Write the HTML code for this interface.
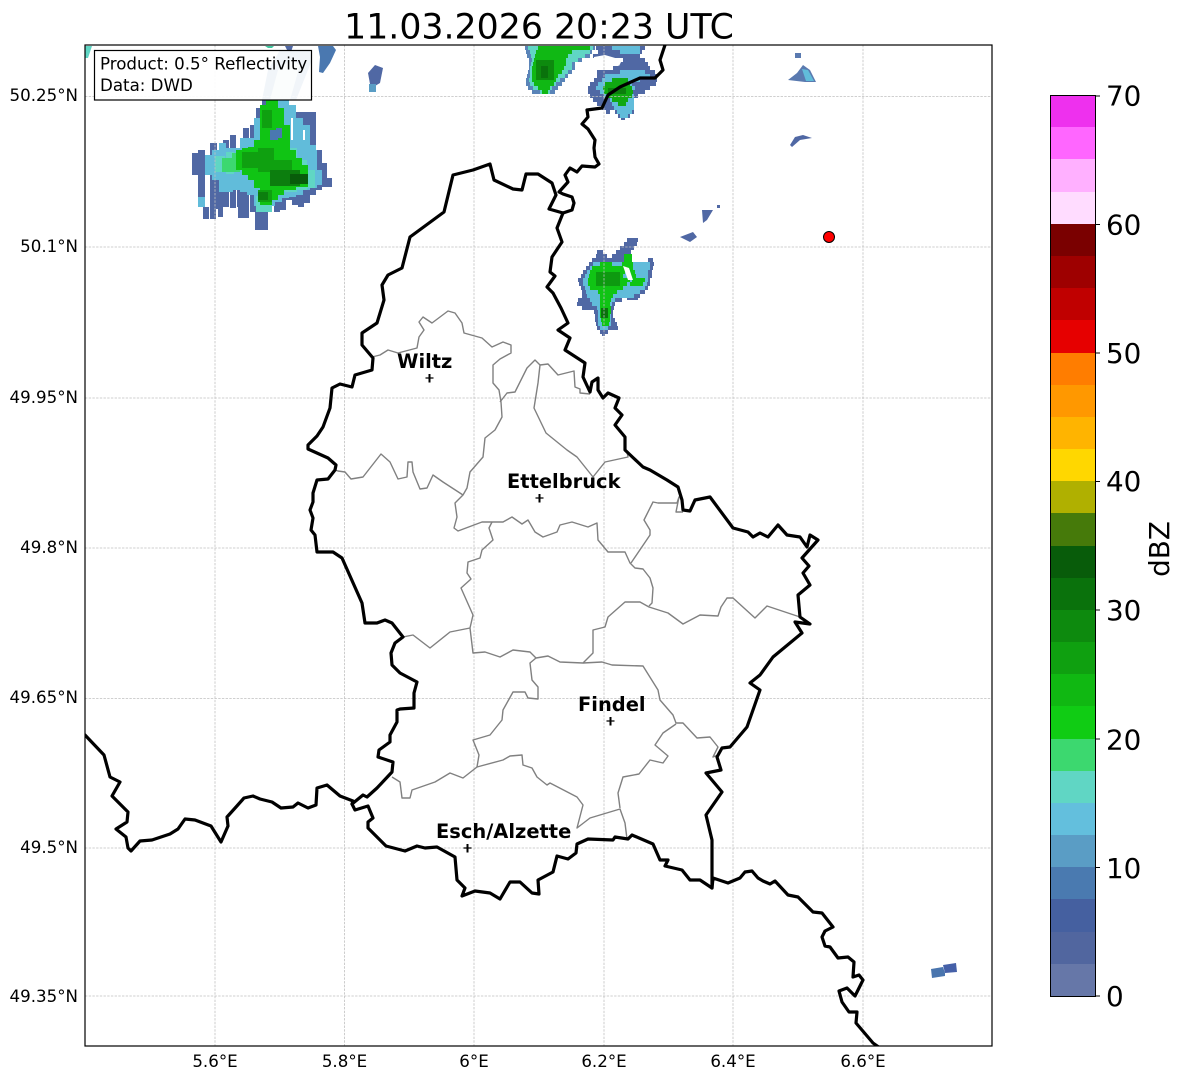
<!DOCTYPE html>
<html><head><meta charset="utf-8"><style>
html,body{margin:0;padding:0;background:#fff}
svg{display:block}
text{font-family:"DejaVu Sans",sans-serif;fill:#000}
.t{font-size:16.67px}
.c{font-size:27.78px}
.l{font-size:19.44px;font-weight:bold}
</style></head><body>
<svg width="1184" height="1081" viewBox="0 0 1184 1081" xmlns="http://www.w3.org/2000/svg">
<defs><clipPath id="ax"><rect x="85" y="45" width="907" height="1001"/></clipPath></defs>
<rect width="1184" height="1081" fill="#fff"/>
<g clip-path="url(#ax)">
<!-- radar blob 1 -->
<g>
<path fill="#5068a4" d="M192 153h6V175h-6zM198 150h7V207h-7zM203 207h6V219h-6zM210 143h7V219h-7zM217 178h6V217h-6zM223 140h6V207h-6zM230 135h6V208h-6zM237 185h6V218h-6zM243 128h6V218h-6zM250 125h6V212h-6zM256 108h6V215h-6zM255 212h13V230h-13zM262 100h6V230h-6zM274 108h6V212h-6zM280 108h6V210h-6zM286 112h6V200h-6zM292 112h6V205h-6zM298 112h6V207h-6zM304 112h6V203h-6zM310 112h6V195h-6zM316 150h6V190h-6zM322 163h5V187h-5zM327 178h5V187h-5z"/>
<path fill="#61bcda" d="M205 155h7V175h-7zM212 150h7V180h-7zM219 143h7V192h-7zM226 148h7V192h-7zM233 148h7V190h-7zM240 138h7V192h-7zM247 138h7V195h-7zM254 118h7V206h-7zM261 105h7V206h-7zM268 100h7V206h-7zM275 100h7V202h-7zM282 100h7V198h-7zM289 105h7V197h-7zM296 118h7V195h-7zM303 125h7V190h-7zM310 145h7V188h-7zM317 170h5V185h-5zM198 197h7V207h-7z"/>
<path fill="#60d6c4" d="M215 156h10V172h-10zM226 152h8V174h-8zM285 148h12V192h-12zM297 160h10V190h-10zM307 170h8V188h-8zM256 196h16V212h-16z"/>
<path fill="#3cd86f" d="M222 158h10V172h-10zM232 153h8V172h-8z"/>
<path fill="#10c414" d="M236 150h6V170h-6zM242 148h6V175h-6zM248 147h6V180h-6zM254 140h6V188h-6zM260 105h6V205h-6zM266 100h6V205h-6zM272 100h6V200h-6zM278 108h6V195h-6zM284 125h6V190h-6zM290 150h6V190h-6zM296 158h6V187h-6zM302 165h6V187h-6z"/>
<path fill="#4a78b0" d="M270 130h8V140h-8zM276 128h6V138h-6z"/>
<path fill="#0fa010" d="M242 152h18V168h-18zM258 148h16V172h-16zM262 110h10V128h-10zM258 190h14V202h-14zM272 160h20V180h-20z"/>
<path fill="#0c7e0e" d="M270 170h30V186h-30zM258 192h10V200h-10z"/>
<path fill="#085c0a" d="M290 174h18V184h-18z"/>
<path fill="#fff" d="M216 209h2V219h-2zM236 207h2V219h-2zM291 118h2V140h-2zM303 130h2V140h-2zM316 112h2V150h-2zM229 208h2V216h-2z"/>
<!-- streak under legend -->
<path fill="#4a7ab0" d="M262 100L268 70 280 50 310 50 312 60 296 100Z"/>
<path fill="#c8e6dc" d="M270 100L278 70 290 60 300 65 290 100Z"/>
<!-- top small -->
<path fill="#4a78b0" d="M318 46L333 46 336 50 330 63 323 73 319 72 320 57Z"/>
<path fill="#5068a4" d="M368 73L375 65 383 68 380 83 375 86 370 84Z"/>
<path fill="#5a9dc5" d="M369 84h7v8h-7z"/>
<path fill="#60d6c4" d="M85 46L92 46 88 58 85 58Z"/>
<path fill="#40c8a0" d="M265 46L274 46 272 48 268 48Z"/>
<path fill="#5068a4" d="M285 46L293 46 291 52 287 50Z"/>
<!-- blob 2 -->
<path fill="#5a84b8" d="M525 46H595v4H525zM526 50H592v4H526zM527 54H590v4H527zM529 58H582v4H529zM529 62H575v4H529zM529 66H575v4H529zM528 70H572v4H528zM527 74H568v4H527zM526 78H565v4H526zM526 82H562v4H526zM528 86H558v4H528zM532 90H555v4H532z"/>
<path fill="#60d6c4" d="M528 46H593v4H528zM530 50H590v4H530zM531 54H585v4H531zM532 58H578v4H532zM531 62H572v4H531zM530 66H572v4H530zM530 70H568v4H530zM530 74H565v4H530zM529 78H560v4H529zM530 82H556v4H530zM533 86H552v4H533zM540 90H550v4H540z"/>
<path fill="#10b814" d="M538 46H590v4H538zM536 50H572v4H536zM535 54H568v4H535zM534 58H566v4H534zM533 62H566v4H533zM532 66H564v4H532zM532 70H562v4H532zM532 74H558v4H532zM532 78H556v4H532zM534 82H554v4H534zM538 86H550v4H538zM542 90H548v4H542z"/>
<path fill="#0d8a0e" d="M536 60H554V80H536z"/>
<path fill="#0a720c" d="M541 66h7V78h-7z"/>
<!-- blob 3 -->
<path fill="#5068a4" d="M596 46H645v4H596zM598 50H642v4H598zM593 54H640v4H593zM623 58H645v4H623zM618 62H648v4H618zM613 66H650v4H613zM597 70H655v4H597zM597 74H657v4H597zM594 78H657v4H594zM590 82H656v4H590zM588 86H650v4H588zM588 90H645v4H588zM590 94H638v4H590zM593 98H632v4H593zM597 102H634v4H597zM602 106H634v4H602zM606 110H610v4H606zM615 110H634v4H615zM618 114H630v4H618zM621 118H625v2H621z"/>
<path fill="#61bcda" d="M612 46H640v4H612zM620 50H640v4H620zM620 70H645v4H620zM605 74H650v4H605zM602 78H640v4H602zM598 82H632v4H598zM596 86H635v4H596zM600 90H632v4H600zM604 94H634v4H604zM610 98H634v4H610zM612 102H634v4H612zM614 106H634v4H614zM617 110H632v4H617zM620 114H628v4H620z"/>
<path fill="#10a812" d="M612 78H628v4H612zM605 82H630v4H605zM603 86H632v4H603zM604 90H633v4H604zM607 94H632v4H607zM612 98H628v4H612zM618 102H626v4H618z"/>
<path fill="#0c7e0e" d="M608 88H626v6H608z"/>
<path fill="#fff" d="M594 57L605 55 622 60 619 66 612 62 608 68 600 68 594 64Z"/>
<!-- blob 4 -->
<path fill="#5068a4" d="M627 238H638v4H627zM624 242H637v4H624zM620 246H634v4H620zM616 250H631v4H616zM597 250H603v4H597zM596 254H607v4H596zM612 254H630v4H612zM592 258H632v4H592zM648 258H653v4H648zM589 262H654v4H589zM586 266H653v4H586zM583 270H652v4H583zM581 274H652v4H581zM578 278H650v4H578zM579 282H650v4H579zM581 286H648v4H581zM582 290H645v4H582zM582 294H640v4H582zM578 298H622v4H578zM627 298H638v2H627zM577 302H615v4H577zM582 306H614v4H582zM594 310H613v4H594zM595 314H613v4H595zM595 318H615v4H595zM596 322H617v4H596zM597 326H618v4H597zM600 330H608v4H600zM602 334H605v2H602z"/>
<path fill="#61bcda" d="M593 262H623v4H593zM630 262H650v4H630zM590 266H650v4H590zM587 270H648v4H587zM585 274H648v4H585zM583 278H648v4H583zM583 282H647v4H583zM585 286H645v4H585zM586 290H640v4H586zM587 294H634v4H587zM590 298H615v4H590zM592 302H612v4H592zM597 306H611v4H597zM598 310H611v4H598zM598 314H611v4H598zM598 318H611v4H598zM598 322H611v4H598zM600 326H608v4H600z"/>
<path fill="#10c414" d="M624 254H632v4H624zM624 258H632v4H624zM600 262H612v4H600zM622 262H633v4H622zM592 266H633v4H592zM590 270H625v4H590zM630 270H635v4H630zM589 274H623v4H589zM630 274H636v4H630zM588 278H630v4H588zM632 278H645v4H632zM588 282H627v4H588zM630 282H643v4H630zM590 286H623v4H590zM598 290H617v4H598zM600 294H613v4H600zM600 298H611v4H600zM600 302H610v4H600zM600 306H611v4H600zM600 310H611v4H600zM600 314H610v4H600zM601 318H610v4H601zM602 322H609v4H602z"/>
<path fill="#0d9a10" d="M596 272H620V286H596z"/>
<path fill="#0a720c" d="M601 308h7v10h-7z"/>
<path fill="#fff" d="M623 266L629 268 633 280 628 280Z"/>
<!-- small -->
<path fill="#5a7ab0" d="M795 53h6v5h-6zM788 80L797 73 803 65 810 70 816 82 805 82Z"/>
<path fill="#61bcda" d="M802 69L808 70 814 81 806 81Z"/>
<path fill="#5068a4" d="M790 145L795 137 803 135 812 138 800 140 792 147ZM702 210L713 210 707 220 703 223ZM717 205h3v3h-3zM680 237L693 232 697 237 690 242Z"/>
<path fill="#4a75ae" d="M931 969L943 967 945 973 945 976 932 978Z"/>
<path fill="#4560a8" d="M943 965L956 963 957 972 945 973Z"/>
</g>
<!-- grid -->
<g stroke="#c0c0c0" stroke-width=".8" stroke-dasharray="2.400 1.300" fill="none">
<path d="M215 45V1046M344.500 45V1046M474 45V1046M604 45V1046M733 45V1046M863 45V1046"/>
<path d="M85 96.500H992M85 247H992M85 398H992M85 548H992M85 698.500H992M85 848H992M85 996H992"/>
</g>
<!-- districts -->
<g fill="none" stroke="#808080" stroke-width="1.400" stroke-linejoin="round">
<path d="M372 357L380 355 388 350 398 353 417 348 419 337 424 330 419 322 423 317 432 323 448 311 455 313 462 323 464 333 482 338 492 347 503 342 511 345 511 353 500 359 493 365 493 383 499 390 501 402 502 417 495 430 485 438 483 457 470 472 467 488 463 495 455 503 457 517 454 528 458 531 482 522 492 522 503 522 512 517 522 524 528 520 535 532 543 537 557 532 560 525 572 522 588 527 597 523 598 540 608 552 625 552 630 563 635 568 643 569 650 578 653 588 652 603 649 606"/>
<path d="M631 563L650 535 650 530 644 520 653 502 658 503 677 503 679 497 676 512 683 512"/>
<path d="M335 470L338 471 345 472 351 479 363 477 381 454 390 462 398 479 407 477 408 462 412 462 413 472 420 489 427 488 433 475 443 482 463 495"/>
<path d="M500 402L507 393 515 392 527 368 535 360 540 365 538 383 534 408 546 433 567 450 577 457 593 477 605 462 628 457 627 452"/>
<path d="M540 365L548 364 558 375 574 371 575 387 580 389 580 393 590 394"/>
<path d="M492 522L489 528 493 540 482 550 480 558 468 562 467 573 471 579 461 588 473 615 470 628 473 653 485 652 500 657 513 650 530 652 536 658 548 656 560 662 583 663 593 653 593 630 605 627 608 617 625 602 640 602 649 607 668 613 683 624 700 615 718 616 721 607 727 598 733 598 755 618 767 606 800 617"/>
<path d="M583 663L602 662 612 665 643 666 658 690 660 700 673 715 676 723 683 723 697 738 710 737 718 747 713 757 718 755"/>
<path d="M536 658L530 663 532 680 538 687 538 699 528 698 525 692 513 692 503 710 502 720 490 735 473 740 479 755 477 767 503 760 510 756 522 755 523 765 532 768 537 777 547 785 550 783 577 797 583 805 577 828 590 818 620 809 625 823 627 839"/>
<path d="M620 808L618 793 623 777 639 774 650 760 663 763 668 756 655 745 663 733 676 724"/>
<path d="M477 767L463 778 450 773 435 782 412 790 410 798 402 798 400 782 392 777"/>
<path d="M470 628L450 632 430 648 413 635 403 637"/>
</g>
<!-- borders -->
<g fill="none" stroke="#000" stroke-width="3.200" stroke-linejoin="round" stroke-linecap="round">
<path d="M85 735L104 755 110 777 120 782 112 796 128 812 127 822 116 829 126 837 128 848 131 851 140 841 152 840 170 834 178 829 185 819 195 820 211 826 221 842 228 826 227 817 236 807 244 798 253 796 260 799 272 802 281 808 293 807 298 803 308 808 316 805 317 788 327 785 340 796 353 801 352 804 355 810 368 806 373 818 368 822 368 828 386 846 405 851 417 846 425 848 437 847 455 857 457 880 465 888 462 896 475 891 490 893 500 899 510 882 520 882 532 893 539 894 538 880 553 872 557 856 568 859 576 853 577 844 588 839 613 840 615 837 628 839 632 835 653 844 660 860 668 860 665 866 682 870 690 880 700 880 712 888 713 878 728 883 740 878 745 872 752 871 758 878 763 881 770 884 775 881 788 895 798 897 813 912 822 913 833 927 825 931 822 937 825 946 830 947 838 958 848 957 854 962 853 977 859 975 863 980 855 996 847 988 839 991 842 1002 849 1012 857 1012 856 1023 873 1043 880 1048"/>
<path d="M352 804L363 795 367 797 377 788 392 772 393 762 378 757 379 750 390 742 390 735 397 722 397 710 400 709 414 708 414 693 417 682 400 673 392 665 391 653 395 643 403 637 392 623 385 620 377 623 365 623 362 603 342 558 333 552 317 552 315 535 311 530 313 518 310 510 313 502 313 493 317 480 328 479 335 470 336 465 328 458 308 449 308 445 317 436 323 427 330 408 332 388 340 384 352 387 355 375 372 370 373 358 362 345 362 333 377 323 384 300 382 285 388 275 402 268 410 237 444 212 453 175 473 170 490 164 494 180 513 189 522 190 526 174 538 174 552 183 556 195 549 209 563 213 572 210 574 203 572 197 563 194 559 192 568 182 565 175 570 168 577 172 582 166 595 167 599 164 595 157 594 148 595 140 588 129 582 124 588 117 587 110 602 108 608 95 620 87 640 78 655 78 663 70 660 60 665 45"/>
<path d="M563 213L557 228 562 242 552 257 550 272 555 276 547 287 553 293 561 308 568 323 558 330 570 338 565 350 585 363 583 377 590 392 592 382 598 378 598 390 603 398 608 393 619 398 615 408 622 415 615 425 625 437 625 450 643 467 650 470 667 480 678 487 682 500 683 510 690 511 695 500 710 497 733 528 748 532 753 537 760 533 768 537 778 525 787 535 800 537 807 547 810 535 818 540 802 558 809 566 803 573 810 585 798 595 800 617 810 624 795 622 802 633 773 657 760 675 750 683 760 690 747 727 730 747 722 748 717 757 721 770 706 773 722 792 706 815 712 840 712 888"/>
</g>
<!-- city markers -->
<g stroke="#000" fill="none">
<path stroke-width="1.300" d="M425.500 378H433.500M535.500 498H543.500M606.500 721H614.500M463.500 848H471.500"/>
<path stroke-width="2" d="M429.500 374V382.500M539.500 494V502.500M610.500 717V725.500M467.500 844V852.500"/>
</g>
<text class="l" x="397" y="368">Wiltz</text>
<text class="l" x="507" y="488">Ettelbruck</text>
<text class="l" x="578" y="711">Findel</text>
<text class="l" x="436" y="838">Esch/Alzette</text>
<circle cx="829" cy="237" r="5.500" fill="#f00" stroke="#000" stroke-width="1"/>
<!-- legend box -->
<rect x="94.500" y="50.500" width="217" height="49.500" fill="#fff" fill-opacity=".92" stroke="#000" stroke-width="1.200"/>
<text class="t" x="100" y="69.500">Product: 0.5° Reflectivity</text>
<text class="t" x="100" y="91">Data: DWD</text>
</g>
<rect x="85" y="45" width="907" height="1001" fill="none" stroke="#000" stroke-width="1.200"/>
<!-- title -->
<text x="539" y="38.500" text-anchor="middle" font-size="34.720">11.03.2026 20:23 UTC</text>
<!-- y ticks -->
<g text-anchor="end">
<text class="t" x="78" y="101">50.25°N</text>
<text class="t" x="78" y="252">50.1°N</text>
<text class="t" x="78" y="403">49.95°N</text>
<text class="t" x="78" y="553">49.8°N</text>
<text class="t" x="78" y="703">49.65°N</text>
<text class="t" x="78" y="853">49.5°N</text>
<text class="t" x="78" y="1002">49.35°N</text>
</g>
<g text-anchor="middle">
<text class="t" x="215" y="1067">5.6°E</text>
<text class="t" x="344.500" y="1067">5.8°E</text>
<text class="t" x="474" y="1067">6°E</text>
<text class="t" x="604" y="1067">6.2°E</text>
<text class="t" x="733" y="1067">6.4°E</text>
<text class="t" x="863" y="1067">6.6°E</text>
</g>
<!-- colorbar -->
<g shape-rendering="crispEdges">
<rect x="1051" y="964" width="44" height="32" fill="#6677a8"/>
<rect x="1051" y="932" width="44" height="32" fill="#51669f"/>
<rect x="1051" y="899" width="44" height="33" fill="#4560a0"/>
<rect x="1051" y="867" width="44" height="32" fill="#4a7ab0"/>
<rect x="1051" y="835" width="44" height="32" fill="#5a9dc5"/>
<rect x="1051" y="803" width="44" height="32" fill="#63bfdd"/>
<rect x="1051" y="771" width="44" height="32" fill="#60d6c4"/>
<rect x="1051" y="739" width="44" height="32" fill="#3cd86f"/>
<rect x="1051" y="706" width="44" height="33" fill="#10cc14"/>
<rect x="1051" y="674" width="44" height="32" fill="#10b812"/>
<rect x="1051" y="642" width="44" height="32" fill="#0fa010"/>
<rect x="1051" y="610" width="44" height="32" fill="#0d8a0e"/>
<rect x="1051" y="578" width="44" height="32" fill="#0a720c"/>
<rect x="1051" y="546" width="44" height="32" fill="#085c0a"/>
<rect x="1051" y="513" width="44" height="33" fill="#467a0a"/>
<rect x="1051" y="481" width="44" height="32" fill="#b0b000"/>
<rect x="1051" y="449" width="44" height="32" fill="#ffd700"/>
<rect x="1051" y="417" width="44" height="32" fill="#ffb400"/>
<rect x="1051" y="385" width="44" height="32" fill="#ff9800"/>
<rect x="1051" y="353" width="44" height="32" fill="#ff7d00"/>
<rect x="1051" y="320" width="44" height="33" fill="#e60000"/>
<rect x="1051" y="288" width="44" height="32" fill="#c00000"/>
<rect x="1051" y="256" width="44" height="32" fill="#9e0000"/>
<rect x="1051" y="224" width="44" height="32" fill="#7a0000"/>
<rect x="1051" y="192" width="44" height="32" fill="#ffdcff"/>
<rect x="1051" y="159" width="44" height="33" fill="#ffb0ff"/>
<rect x="1051" y="127" width="44" height="32" fill="#ff66ff"/>
<rect x="1051" y="95" width="44" height="32" fill="#ee30ee"/>
</g>
<rect x="1050.500" y="95.500" width="45" height="901" fill="none" stroke="#000" stroke-width="1"/>
<path stroke="#000" stroke-width="1" d="M1095 96H1100M1095 224.500H1100M1095 353H1100M1095 481.500H1100M1095 610H1100M1095 739H1100M1095 867.500H1100M1095 996H1100"/>
<text class="c" x="1106" y="105.500">70</text>
<text class="c" x="1106" y="234.500">60</text>
<text class="c" x="1106" y="363">50</text>
<text class="c" x="1106" y="491">40</text>
<text class="c" x="1106" y="620">30</text>
<text class="c" x="1106" y="749.500">20</text>
<text class="c" x="1106" y="878">10</text>
<text class="c" x="1106" y="1006">0</text>
<text class="c" transform="translate(1169 549) rotate(-90)" text-anchor="middle">dBZ</text>
</svg>
</body></html>
